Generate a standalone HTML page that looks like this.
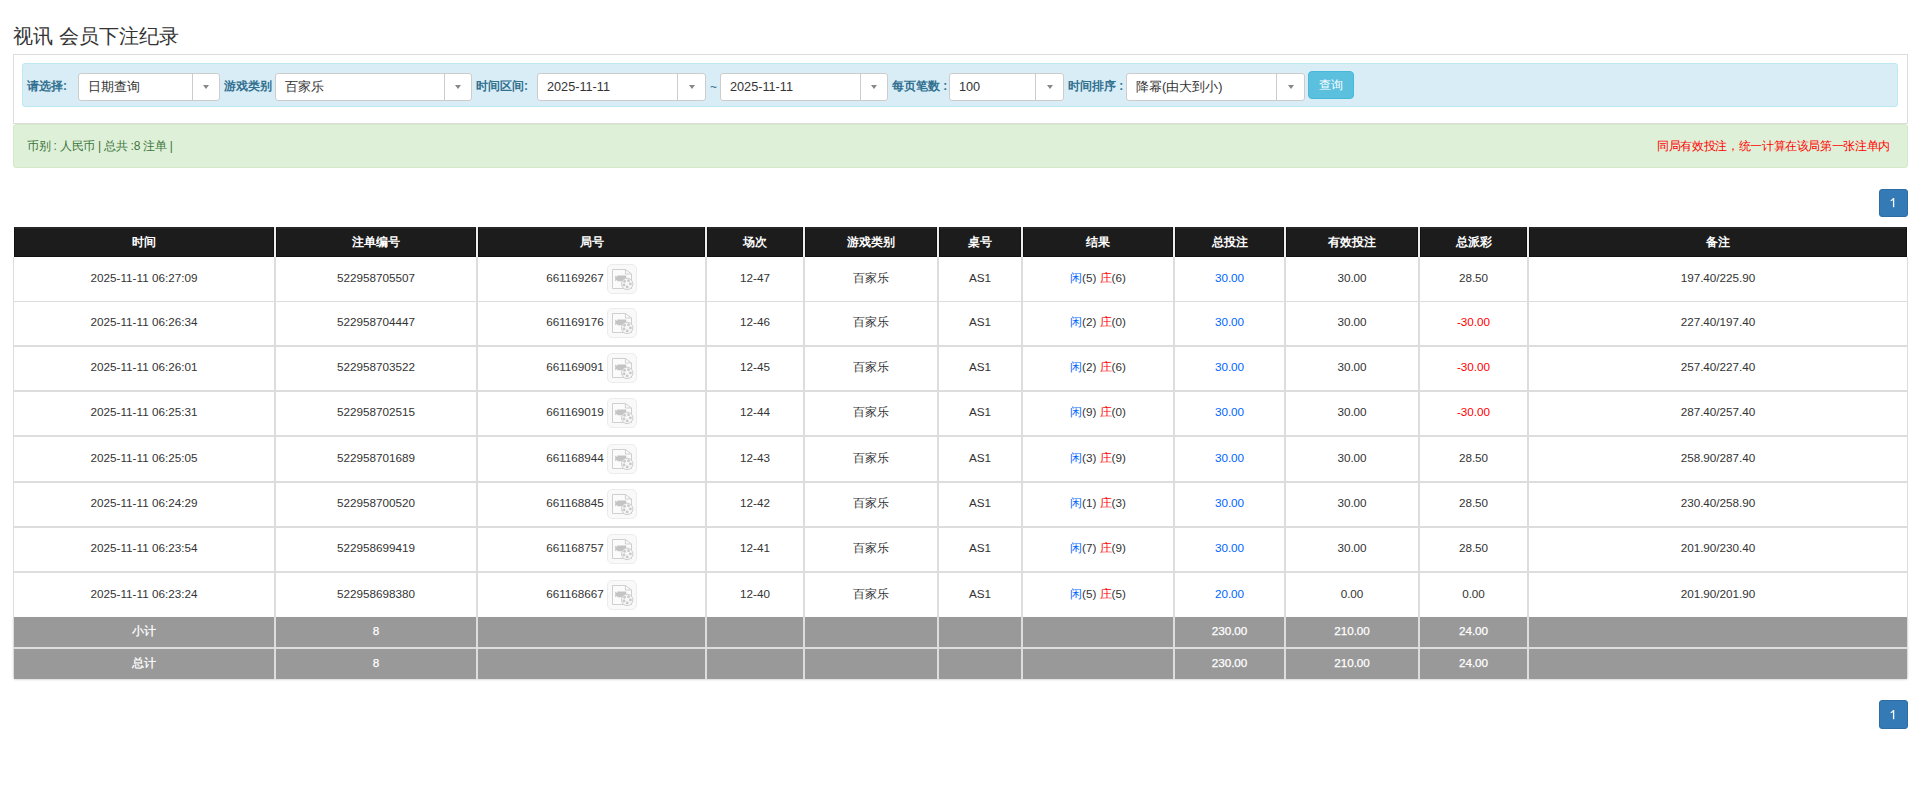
<!DOCTYPE html><html><head><meta charset="utf-8"><title>视讯 会员下注纪录</title><style>
*{margin:0;padding:0;box-sizing:border-box}
html,body{width:1919px;height:795px;overflow:hidden;background:#fff}
body{font-family:"Liberation Sans",sans-serif;color:#333;position:relative}
.a{position:absolute}
.t{position:absolute;white-space:nowrap}
.title{left:13px;top:26px;font-size:20px;line-height:20px;color:#333}
.panel{left:13px;top:54px;width:1895px;height:70px;border:1px solid #ddd;background:#fff}
.info{left:22px;top:63px;width:1876px;height:44px;background:#d9edf7;border:1px solid #bce8f1;border-radius:3px}
.lbl{font-size:12px;font-weight:bold;color:#31708f;line-height:14px;top:79px}
.sel{top:73px;height:28px;background:#fff;border:1px solid #ccc;border-radius:3px}
.sel .v{position:absolute;left:9px;top:0;line-height:26px;font-size:12.7px;color:#333;white-space:nowrap}
.sel .d{position:absolute;top:0;bottom:0;width:1px;background:#ccc}
.sel .ar{position:absolute;top:11px;width:0;height:0;border-left:3.5px solid transparent;border-right:3.5px solid transparent;border-top:4.5px solid #888}
.btn{left:1308px;top:71px;width:46px;height:28px;background:#5bc0de;border:1px solid #46b8da;border-radius:4px;color:#fff;font-size:12px;line-height:26px;text-align:center}
.ok{left:13px;top:124px;width:1895px;height:44px;background:#dff0d8;border:1px solid #d6e9c6;border-radius:3px}
.oktxt{left:27px;top:139px;font-size:12px;letter-spacing:-0.25px;line-height:14px;color:#3c763d}
.red{left:1657px;top:139px;font-size:12px;letter-spacing:-0.35px;line-height:14px;color:#f00}
.pg{width:29px;height:28px;background:#337ab7;border:1px solid #2e6da4;border-radius:3px;color:#fff;font-size:12px;text-align:center;line-height:26px}
.hd{top:227px;height:30px;background:#1c1c1c;border:1px solid #111;border-top:2px solid #262626;color:#fff;font-weight:bold;font-size:12px;line-height:27px;text-align:center}
.vl{background:#ddd}
.hl{background:#ddd}
.c{font-size:11.7px;line-height:14px;text-align:center;color:#333}
.gr{background:#999}
.gc{color:#fff;font-size:11.7px;line-height:14px;text-align:center;-webkit-text-stroke:0.25px #fff}
.blue{color:#06f}
.rd{color:#f00}
.ico{width:29px;height:29px;border:1px solid #eee;border-radius:4px;background:#fafafa}
</style></head><body>
<div class="t title">视讯 会员下注纪录</div>
<div class="a panel"></div>
<div class="a info"></div>
<div class="t lbl" style="left:27px">请选择:</div>
<div class="t lbl" style="left:224px">游戏类别</div>
<div class="t lbl" style="left:476px">时间区间:</div>
<div class="t lbl" style="left:892px">每页笔数 :</div>
<div class="t lbl" style="left:1068px">时间排序 :</div>
<div class="a sel" style="left:78px;width:142px"><span class="v">日期查询</span><i class="d" style="left:113px"></i><i class="ar" style="left:124.0px"></i></div>
<div class="a sel" style="left:275px;width:197px"><span class="v">百家乐</span><i class="d" style="left:168px"></i><i class="ar" style="left:179.0px"></i></div>
<div class="a sel" style="left:537px;width:169px"><span class="v">2025-11-11</span><i class="d" style="left:139px"></i><i class="ar" style="left:150.5px"></i></div>
<div class="a sel" style="left:720px;width:168px"><span class="v">2025-11-11</span><i class="d" style="left:139px"></i><i class="ar" style="left:150.0px"></i></div>
<div class="a sel" style="left:949px;width:115px"><span class="v">100</span><i class="d" style="left:85px"></i><i class="ar" style="left:96.5px"></i></div>
<div class="a sel" style="left:1126px;width:179px"><span class="v">降幂(由大到小)</span><i class="d" style="left:149px"></i><i class="ar" style="left:160.5px"></i></div>
<div class="t lbl" style="left:710px;top:80px;font-weight:normal">~</div>
<div class="a btn">查询</div>
<div class="a ok"></div>
<div class="t oktxt">币别 : 人民币 | 总共 :8 注单 |</div>
<div class="t red">同局有效投注，统一计算在该局第一张注单内</div>
<div class="a pg" style="left:1879px;top:189px"><svg width="29" height="28" viewBox="0 0 29 28" style="position:absolute;left:-1px;top:-1px"><path d="M14.6 9.2V18.2" stroke="#fff" stroke-width="1.3"/><path d="M14.6 9.3C14 10.6 12.8 11.4 11.7 11.8" stroke="#fff" stroke-width="1.1" fill="none"/></svg></div>
<div class="a pg" style="left:1879px;top:700px;height:29px"><svg width="29" height="28" viewBox="0 0 29 28" style="position:absolute;left:-1px;top:0px"><path d="M14.6 9.2V18.2" stroke="#fff" stroke-width="1.3"/><path d="M14.6 9.3C14 10.6 12.8 11.4 11.7 11.8" stroke="#fff" stroke-width="1.1" fill="none"/></svg></div>
<div class="a hd" style="left:14px;width:260px">时间</div>
<div class="a hd" style="left:276px;width:200px">注单编号</div>
<div class="a hd" style="left:478px;width:227px">局号</div>
<div class="a hd" style="left:707px;width:96px">场次</div>
<div class="a hd" style="left:805px;width:132px">游戏类别</div>
<div class="a hd" style="left:939px;width:82px">桌号</div>
<div class="a hd" style="left:1023px;width:150px">结果</div>
<div class="a hd" style="left:1175px;width:109px">总投注</div>
<div class="a hd" style="left:1286px;width:132px">有效投注</div>
<div class="a hd" style="left:1420px;width:107px">总派彩</div>
<div class="a hd" style="left:1529px;width:378px">备注</div>
<div class="a" style="left:274px;top:227px;width:2px;height:30px;background:#eee"></div>
<div class="a" style="left:476px;top:227px;width:2px;height:30px;background:#eee"></div>
<div class="a" style="left:705px;top:227px;width:2px;height:30px;background:#eee"></div>
<div class="a" style="left:803px;top:227px;width:2px;height:30px;background:#eee"></div>
<div class="a" style="left:937px;top:227px;width:2px;height:30px;background:#eee"></div>
<div class="a" style="left:1021px;top:227px;width:2px;height:30px;background:#eee"></div>
<div class="a" style="left:1173px;top:227px;width:2px;height:30px;background:#eee"></div>
<div class="a" style="left:1284px;top:227px;width:2px;height:30px;background:#eee"></div>
<div class="a" style="left:1418px;top:227px;width:2px;height:30px;background:#eee"></div>
<div class="a" style="left:1527px;top:227px;width:2px;height:30px;background:#eee"></div>
<div class="a vl" style="left:13px;top:257px;width:1px;height:360px"></div>
<div class="a vl" style="left:1907px;top:257px;width:1px;height:360px"></div>
<div class="a vl" style="left:274px;top:257px;width:2px;height:360px"></div>
<div class="a vl" style="left:476px;top:257px;width:2px;height:360px"></div>
<div class="a vl" style="left:705px;top:257px;width:2px;height:360px"></div>
<div class="a vl" style="left:803px;top:257px;width:2px;height:360px"></div>
<div class="a vl" style="left:937px;top:257px;width:2px;height:360px"></div>
<div class="a vl" style="left:1021px;top:257px;width:2px;height:360px"></div>
<div class="a vl" style="left:1173px;top:257px;width:2px;height:360px"></div>
<div class="a vl" style="left:1284px;top:257px;width:2px;height:360px"></div>
<div class="a vl" style="left:1418px;top:257px;width:2px;height:360px"></div>
<div class="a vl" style="left:1527px;top:257px;width:2px;height:360px"></div>
<div class="t c" style="left:14px;width:260px;top:271.0px">2025-11-11 06:27:09</div>
<div class="t c" style="left:276px;width:200px;top:271.0px">522958705507</div>
<div class="t c" style="left:478px;width:227px;top:271.0px;padding-right:33px">661169267</div>
<div class="t c" style="left:707px;width:96px;top:271.0px">12-47</div>
<div class="t c" style="left:805px;width:132px;top:271.0px">百家乐</div>
<div class="t c" style="left:939px;width:82px;top:271.0px">AS1</div>
<div class="t c" style="left:1023px;width:150px;top:271.0px"><span class="blue">闲</span>(5) <span class="rd">庄</span>(6)</div>
<div class="t c" style="left:1175px;width:109px;top:271.0px"><span class="blue">30.00</span></div>
<div class="t c" style="left:1286px;width:132px;top:271.0px">30.00</div>
<div class="t c" style="left:1420px;width:107px;top:271.0px">28.50</div>
<div class="t c" style="left:1529px;width:378px;top:271.0px">197.40/225.90</div>
<div class="a" style="left:607px;top:264px;width:30px;height:30px"><svg width="30" height="30" viewBox="0 0 30 30"><rect x="0.5" y="0.5" width="29" height="29" rx="4.5" fill="#f9f9f9" stroke="#ececec"/><path d="M5.5 5.5H18.4L24.5 10V24.5H5.5Z" fill="#fbfbfb" stroke="#cfcfcf"/><path d="M18.4 5.5V10H24.5" fill="none" stroke="#cfcfcf"/><path d="M8.2 11.6L10.2 13V11.6H19.2V17.2H10.2V15.8L8.2 17.2Z" fill="#c4c4c4"/><circle cx="20.2" cy="19.9" r="5.7" fill="#f7f7f7" stroke="#cdcdcd"/><g fill="#c9c9c9"><circle cx="21.5" cy="16.7" r="1.4"/><circle cx="23.4" cy="19.9" r="1.4"/><circle cx="20.2" cy="22.9" r="1.4"/><circle cx="17.0" cy="20.9" r="1.4"/><circle cx="17.6" cy="17.3" r="1.4"/></g></svg></div>
<div class="a hl" style="left:13px;top:301px;width:1895px;height:1px"></div>
<div class="t c" style="left:14px;width:260px;top:315.0px">2025-11-11 06:26:34</div>
<div class="t c" style="left:276px;width:200px;top:315.0px">522958704447</div>
<div class="t c" style="left:478px;width:227px;top:315.0px;padding-right:33px">661169176</div>
<div class="t c" style="left:707px;width:96px;top:315.0px">12-46</div>
<div class="t c" style="left:805px;width:132px;top:315.0px">百家乐</div>
<div class="t c" style="left:939px;width:82px;top:315.0px">AS1</div>
<div class="t c" style="left:1023px;width:150px;top:315.0px"><span class="blue">闲</span>(2) <span class="rd">庄</span>(0)</div>
<div class="t c" style="left:1175px;width:109px;top:315.0px"><span class="blue">30.00</span></div>
<div class="t c" style="left:1286px;width:132px;top:315.0px">30.00</div>
<div class="t c" style="left:1420px;width:107px;top:315.0px"><span class="rd">-30.00</span></div>
<div class="t c" style="left:1529px;width:378px;top:315.0px">227.40/197.40</div>
<div class="a" style="left:607px;top:308px;width:30px;height:30px"><svg width="30" height="30" viewBox="0 0 30 30"><rect x="0.5" y="0.5" width="29" height="29" rx="4.5" fill="#f9f9f9" stroke="#ececec"/><path d="M5.5 5.5H18.4L24.5 10V24.5H5.5Z" fill="#fbfbfb" stroke="#cfcfcf"/><path d="M18.4 5.5V10H24.5" fill="none" stroke="#cfcfcf"/><path d="M8.2 11.6L10.2 13V11.6H19.2V17.2H10.2V15.8L8.2 17.2Z" fill="#c4c4c4"/><circle cx="20.2" cy="19.9" r="5.7" fill="#f7f7f7" stroke="#cdcdcd"/><g fill="#c9c9c9"><circle cx="21.5" cy="16.7" r="1.4"/><circle cx="23.4" cy="19.9" r="1.4"/><circle cx="20.2" cy="22.9" r="1.4"/><circle cx="17.0" cy="20.9" r="1.4"/><circle cx="17.6" cy="17.3" r="1.4"/></g></svg></div>
<div class="a hl" style="left:13px;top:345px;width:1895px;height:2px"></div>
<div class="t c" style="left:14px;width:260px;top:360.0px">2025-11-11 06:26:01</div>
<div class="t c" style="left:276px;width:200px;top:360.0px">522958703522</div>
<div class="t c" style="left:478px;width:227px;top:360.0px;padding-right:33px">661169091</div>
<div class="t c" style="left:707px;width:96px;top:360.0px">12-45</div>
<div class="t c" style="left:805px;width:132px;top:360.0px">百家乐</div>
<div class="t c" style="left:939px;width:82px;top:360.0px">AS1</div>
<div class="t c" style="left:1023px;width:150px;top:360.0px"><span class="blue">闲</span>(2) <span class="rd">庄</span>(6)</div>
<div class="t c" style="left:1175px;width:109px;top:360.0px"><span class="blue">30.00</span></div>
<div class="t c" style="left:1286px;width:132px;top:360.0px">30.00</div>
<div class="t c" style="left:1420px;width:107px;top:360.0px"><span class="rd">-30.00</span></div>
<div class="t c" style="left:1529px;width:378px;top:360.0px">257.40/227.40</div>
<div class="a" style="left:607px;top:353px;width:30px;height:30px"><svg width="30" height="30" viewBox="0 0 30 30"><rect x="0.5" y="0.5" width="29" height="29" rx="4.5" fill="#f9f9f9" stroke="#ececec"/><path d="M5.5 5.5H18.4L24.5 10V24.5H5.5Z" fill="#fbfbfb" stroke="#cfcfcf"/><path d="M18.4 5.5V10H24.5" fill="none" stroke="#cfcfcf"/><path d="M8.2 11.6L10.2 13V11.6H19.2V17.2H10.2V15.8L8.2 17.2Z" fill="#c4c4c4"/><circle cx="20.2" cy="19.9" r="5.7" fill="#f7f7f7" stroke="#cdcdcd"/><g fill="#c9c9c9"><circle cx="21.5" cy="16.7" r="1.4"/><circle cx="23.4" cy="19.9" r="1.4"/><circle cx="20.2" cy="22.9" r="1.4"/><circle cx="17.0" cy="20.9" r="1.4"/><circle cx="17.6" cy="17.3" r="1.4"/></g></svg></div>
<div class="a hl" style="left:13px;top:390px;width:1895px;height:2px"></div>
<div class="t c" style="left:14px;width:260px;top:405.0px">2025-11-11 06:25:31</div>
<div class="t c" style="left:276px;width:200px;top:405.0px">522958702515</div>
<div class="t c" style="left:478px;width:227px;top:405.0px;padding-right:33px">661169019</div>
<div class="t c" style="left:707px;width:96px;top:405.0px">12-44</div>
<div class="t c" style="left:805px;width:132px;top:405.0px">百家乐</div>
<div class="t c" style="left:939px;width:82px;top:405.0px">AS1</div>
<div class="t c" style="left:1023px;width:150px;top:405.0px"><span class="blue">闲</span>(9) <span class="rd">庄</span>(0)</div>
<div class="t c" style="left:1175px;width:109px;top:405.0px"><span class="blue">30.00</span></div>
<div class="t c" style="left:1286px;width:132px;top:405.0px">30.00</div>
<div class="t c" style="left:1420px;width:107px;top:405.0px"><span class="rd">-30.00</span></div>
<div class="t c" style="left:1529px;width:378px;top:405.0px">287.40/257.40</div>
<div class="a" style="left:607px;top:398px;width:30px;height:30px"><svg width="30" height="30" viewBox="0 0 30 30"><rect x="0.5" y="0.5" width="29" height="29" rx="4.5" fill="#f9f9f9" stroke="#ececec"/><path d="M5.5 5.5H18.4L24.5 10V24.5H5.5Z" fill="#fbfbfb" stroke="#cfcfcf"/><path d="M18.4 5.5V10H24.5" fill="none" stroke="#cfcfcf"/><path d="M8.2 11.6L10.2 13V11.6H19.2V17.2H10.2V15.8L8.2 17.2Z" fill="#c4c4c4"/><circle cx="20.2" cy="19.9" r="5.7" fill="#f7f7f7" stroke="#cdcdcd"/><g fill="#c9c9c9"><circle cx="21.5" cy="16.7" r="1.4"/><circle cx="23.4" cy="19.9" r="1.4"/><circle cx="20.2" cy="22.9" r="1.4"/><circle cx="17.0" cy="20.9" r="1.4"/><circle cx="17.6" cy="17.3" r="1.4"/></g></svg></div>
<div class="a hl" style="left:13px;top:435px;width:1895px;height:2px"></div>
<div class="t c" style="left:14px;width:260px;top:451.0px">2025-11-11 06:25:05</div>
<div class="t c" style="left:276px;width:200px;top:451.0px">522958701689</div>
<div class="t c" style="left:478px;width:227px;top:451.0px;padding-right:33px">661168944</div>
<div class="t c" style="left:707px;width:96px;top:451.0px">12-43</div>
<div class="t c" style="left:805px;width:132px;top:451.0px">百家乐</div>
<div class="t c" style="left:939px;width:82px;top:451.0px">AS1</div>
<div class="t c" style="left:1023px;width:150px;top:451.0px"><span class="blue">闲</span>(3) <span class="rd">庄</span>(9)</div>
<div class="t c" style="left:1175px;width:109px;top:451.0px"><span class="blue">30.00</span></div>
<div class="t c" style="left:1286px;width:132px;top:451.0px">30.00</div>
<div class="t c" style="left:1420px;width:107px;top:451.0px">28.50</div>
<div class="t c" style="left:1529px;width:378px;top:451.0px">258.90/287.40</div>
<div class="a" style="left:607px;top:444px;width:30px;height:30px"><svg width="30" height="30" viewBox="0 0 30 30"><rect x="0.5" y="0.5" width="29" height="29" rx="4.5" fill="#f9f9f9" stroke="#ececec"/><path d="M5.5 5.5H18.4L24.5 10V24.5H5.5Z" fill="#fbfbfb" stroke="#cfcfcf"/><path d="M18.4 5.5V10H24.5" fill="none" stroke="#cfcfcf"/><path d="M8.2 11.6L10.2 13V11.6H19.2V17.2H10.2V15.8L8.2 17.2Z" fill="#c4c4c4"/><circle cx="20.2" cy="19.9" r="5.7" fill="#f7f7f7" stroke="#cdcdcd"/><g fill="#c9c9c9"><circle cx="21.5" cy="16.7" r="1.4"/><circle cx="23.4" cy="19.9" r="1.4"/><circle cx="20.2" cy="22.9" r="1.4"/><circle cx="17.0" cy="20.9" r="1.4"/><circle cx="17.6" cy="17.3" r="1.4"/></g></svg></div>
<div class="a hl" style="left:13px;top:481px;width:1895px;height:2px"></div>
<div class="t c" style="left:14px;width:260px;top:496.0px">2025-11-11 06:24:29</div>
<div class="t c" style="left:276px;width:200px;top:496.0px">522958700520</div>
<div class="t c" style="left:478px;width:227px;top:496.0px;padding-right:33px">661168845</div>
<div class="t c" style="left:707px;width:96px;top:496.0px">12-42</div>
<div class="t c" style="left:805px;width:132px;top:496.0px">百家乐</div>
<div class="t c" style="left:939px;width:82px;top:496.0px">AS1</div>
<div class="t c" style="left:1023px;width:150px;top:496.0px"><span class="blue">闲</span>(1) <span class="rd">庄</span>(3)</div>
<div class="t c" style="left:1175px;width:109px;top:496.0px"><span class="blue">30.00</span></div>
<div class="t c" style="left:1286px;width:132px;top:496.0px">30.00</div>
<div class="t c" style="left:1420px;width:107px;top:496.0px">28.50</div>
<div class="t c" style="left:1529px;width:378px;top:496.0px">230.40/258.90</div>
<div class="a" style="left:607px;top:489px;width:30px;height:30px"><svg width="30" height="30" viewBox="0 0 30 30"><rect x="0.5" y="0.5" width="29" height="29" rx="4.5" fill="#f9f9f9" stroke="#ececec"/><path d="M5.5 5.5H18.4L24.5 10V24.5H5.5Z" fill="#fbfbfb" stroke="#cfcfcf"/><path d="M18.4 5.5V10H24.5" fill="none" stroke="#cfcfcf"/><path d="M8.2 11.6L10.2 13V11.6H19.2V17.2H10.2V15.8L8.2 17.2Z" fill="#c4c4c4"/><circle cx="20.2" cy="19.9" r="5.7" fill="#f7f7f7" stroke="#cdcdcd"/><g fill="#c9c9c9"><circle cx="21.5" cy="16.7" r="1.4"/><circle cx="23.4" cy="19.9" r="1.4"/><circle cx="20.2" cy="22.9" r="1.4"/><circle cx="17.0" cy="20.9" r="1.4"/><circle cx="17.6" cy="17.3" r="1.4"/></g></svg></div>
<div class="a hl" style="left:13px;top:526px;width:1895px;height:2px"></div>
<div class="t c" style="left:14px;width:260px;top:541.0px">2025-11-11 06:23:54</div>
<div class="t c" style="left:276px;width:200px;top:541.0px">522958699419</div>
<div class="t c" style="left:478px;width:227px;top:541.0px;padding-right:33px">661168757</div>
<div class="t c" style="left:707px;width:96px;top:541.0px">12-41</div>
<div class="t c" style="left:805px;width:132px;top:541.0px">百家乐</div>
<div class="t c" style="left:939px;width:82px;top:541.0px">AS1</div>
<div class="t c" style="left:1023px;width:150px;top:541.0px"><span class="blue">闲</span>(7) <span class="rd">庄</span>(9)</div>
<div class="t c" style="left:1175px;width:109px;top:541.0px"><span class="blue">30.00</span></div>
<div class="t c" style="left:1286px;width:132px;top:541.0px">30.00</div>
<div class="t c" style="left:1420px;width:107px;top:541.0px">28.50</div>
<div class="t c" style="left:1529px;width:378px;top:541.0px">201.90/230.40</div>
<div class="a" style="left:607px;top:534px;width:30px;height:30px"><svg width="30" height="30" viewBox="0 0 30 30"><rect x="0.5" y="0.5" width="29" height="29" rx="4.5" fill="#f9f9f9" stroke="#ececec"/><path d="M5.5 5.5H18.4L24.5 10V24.5H5.5Z" fill="#fbfbfb" stroke="#cfcfcf"/><path d="M18.4 5.5V10H24.5" fill="none" stroke="#cfcfcf"/><path d="M8.2 11.6L10.2 13V11.6H19.2V17.2H10.2V15.8L8.2 17.2Z" fill="#c4c4c4"/><circle cx="20.2" cy="19.9" r="5.7" fill="#f7f7f7" stroke="#cdcdcd"/><g fill="#c9c9c9"><circle cx="21.5" cy="16.7" r="1.4"/><circle cx="23.4" cy="19.9" r="1.4"/><circle cx="20.2" cy="22.9" r="1.4"/><circle cx="17.0" cy="20.9" r="1.4"/><circle cx="17.6" cy="17.3" r="1.4"/></g></svg></div>
<div class="a hl" style="left:13px;top:571px;width:1895px;height:2px"></div>
<div class="t c" style="left:14px;width:260px;top:587.0px">2025-11-11 06:23:24</div>
<div class="t c" style="left:276px;width:200px;top:587.0px">522958698380</div>
<div class="t c" style="left:478px;width:227px;top:587.0px;padding-right:33px">661168667</div>
<div class="t c" style="left:707px;width:96px;top:587.0px">12-40</div>
<div class="t c" style="left:805px;width:132px;top:587.0px">百家乐</div>
<div class="t c" style="left:939px;width:82px;top:587.0px">AS1</div>
<div class="t c" style="left:1023px;width:150px;top:587.0px"><span class="blue">闲</span>(5) <span class="rd">庄</span>(5)</div>
<div class="t c" style="left:1175px;width:109px;top:587.0px"><span class="blue">20.00</span></div>
<div class="t c" style="left:1286px;width:132px;top:587.0px">0.00</div>
<div class="t c" style="left:1420px;width:107px;top:587.0px">0.00</div>
<div class="t c" style="left:1529px;width:378px;top:587.0px">201.90/201.90</div>
<div class="a" style="left:607px;top:580px;width:30px;height:30px"><svg width="30" height="30" viewBox="0 0 30 30"><rect x="0.5" y="0.5" width="29" height="29" rx="4.5" fill="#f9f9f9" stroke="#ececec"/><path d="M5.5 5.5H18.4L24.5 10V24.5H5.5Z" fill="#fbfbfb" stroke="#cfcfcf"/><path d="M18.4 5.5V10H24.5" fill="none" stroke="#cfcfcf"/><path d="M8.2 11.6L10.2 13V11.6H19.2V17.2H10.2V15.8L8.2 17.2Z" fill="#c4c4c4"/><circle cx="20.2" cy="19.9" r="5.7" fill="#f7f7f7" stroke="#cdcdcd"/><g fill="#c9c9c9"><circle cx="21.5" cy="16.7" r="1.4"/><circle cx="23.4" cy="19.9" r="1.4"/><circle cx="20.2" cy="22.9" r="1.4"/><circle cx="17.0" cy="20.9" r="1.4"/><circle cx="17.6" cy="17.3" r="1.4"/></g></svg></div>
<div class="a" style="left:13px;top:617px;width:1895px;height:62px;background:#ddd;border-radius:0 0 3px 3px;box-shadow:0 1px 2px rgba(0,0,0,.15)"></div>
<div class="a gr" style="left:14px;top:617px;width:260px;height:30px"></div>
<div class="a gr" style="left:276px;top:617px;width:200px;height:30px"></div>
<div class="a gr" style="left:478px;top:617px;width:227px;height:30px"></div>
<div class="a gr" style="left:707px;top:617px;width:96px;height:30px"></div>
<div class="a gr" style="left:805px;top:617px;width:132px;height:30px"></div>
<div class="a gr" style="left:939px;top:617px;width:82px;height:30px"></div>
<div class="a gr" style="left:1023px;top:617px;width:150px;height:30px"></div>
<div class="a gr" style="left:1175px;top:617px;width:109px;height:30px"></div>
<div class="a gr" style="left:1286px;top:617px;width:132px;height:30px"></div>
<div class="a gr" style="left:1420px;top:617px;width:107px;height:30px"></div>
<div class="a gr" style="left:1529px;top:617px;width:378px;height:30px"></div>
<div class="t gc" style="left:14px;width:260px;top:623.5px">小计</div>
<div class="t gc" style="left:276px;width:200px;top:623.5px">8</div>
<div class="t gc" style="left:1175px;width:109px;top:623.5px">230.00</div>
<div class="t gc" style="left:1286px;width:132px;top:623.5px">210.00</div>
<div class="t gc" style="left:1420px;width:107px;top:623.5px">24.00</div>
<div class="a gr" style="left:14px;top:649px;width:260px;height:30px"></div>
<div class="a gr" style="left:276px;top:649px;width:200px;height:30px"></div>
<div class="a gr" style="left:478px;top:649px;width:227px;height:30px"></div>
<div class="a gr" style="left:707px;top:649px;width:96px;height:30px"></div>
<div class="a gr" style="left:805px;top:649px;width:132px;height:30px"></div>
<div class="a gr" style="left:939px;top:649px;width:82px;height:30px"></div>
<div class="a gr" style="left:1023px;top:649px;width:150px;height:30px"></div>
<div class="a gr" style="left:1175px;top:649px;width:109px;height:30px"></div>
<div class="a gr" style="left:1286px;top:649px;width:132px;height:30px"></div>
<div class="a gr" style="left:1420px;top:649px;width:107px;height:30px"></div>
<div class="a gr" style="left:1529px;top:649px;width:378px;height:30px"></div>
<div class="t gc" style="left:14px;width:260px;top:655.5px">总计</div>
<div class="t gc" style="left:276px;width:200px;top:655.5px">8</div>
<div class="t gc" style="left:1175px;width:109px;top:655.5px">230.00</div>
<div class="t gc" style="left:1286px;width:132px;top:655.5px">210.00</div>
<div class="t gc" style="left:1420px;width:107px;top:655.5px">24.00</div>
</body></html>
